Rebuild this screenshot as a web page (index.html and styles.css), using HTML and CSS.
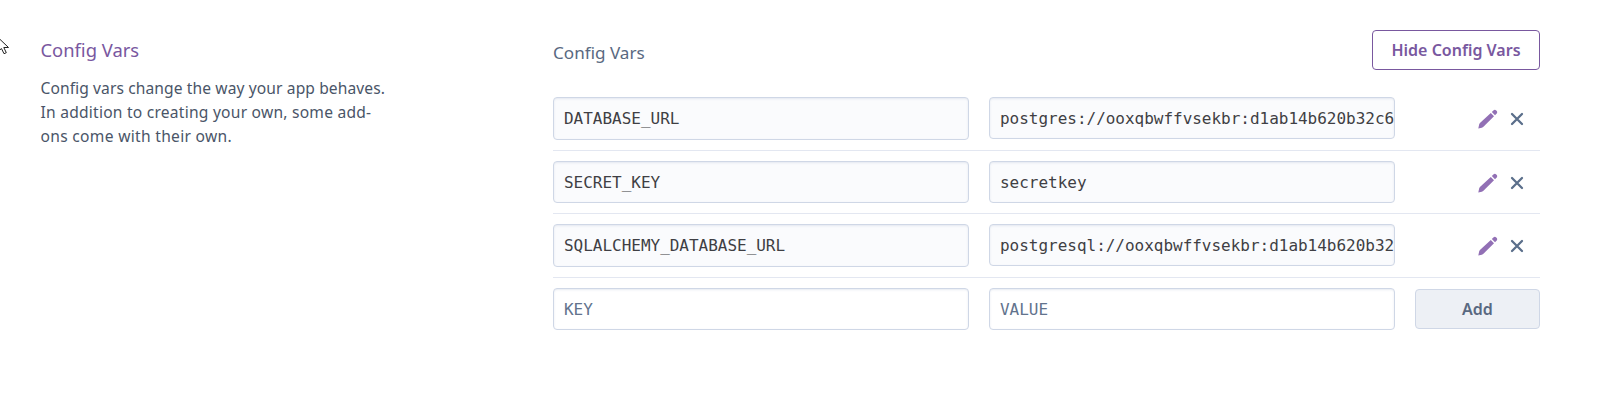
FILE: index.html
```
<!DOCTYPE html>
<html lang="en">
<head>
<meta charset="utf-8">
<title>Config Vars</title>
<link rel="stylesheet" href="styles.css">
</head>
<body>
<svg class="defs" width="0" height="0" aria-hidden="true">
  <symbol id="pencil" viewBox="0 0 20 20">
    <path d="M0.3 19.6 1.2 15.2Q1.5 14.4 2.2 13.8L12.8 4 16 7.2 5.7 17.5Q4.8 18.4 3.8 18.7Z"/>
    <path d="M13.8 3 15.4 1.5Q16.8 0.3 18.2 1.4L18.8 2Q19.8 3.3 18.7 4.6L17 6.2Z"/>
  </symbol>
  <symbol id="cross" viewBox="0 0 14 14">
    <path d="M2 2 12 12M12 2 2 12"/>
  </symbol>
</svg>
<svg class="cursor" width="10" height="22" viewBox="0 0 10 22"><path d="M-3 0.5 8.5 11.5H3.8L6.3 16.7 4 17.7 1.5 12.6-3 16Z"/></svg>
<main class="settings">
  <aside class="intro">
    <h2 class="intro-title">Config Vars</h2>
    <p class="intro-text"><span class="line-a">Config vars change the way your app behaves.</span><br><span class="line-b">In addition to creating your own, some add-</span><br><span class="line-c">ons come with their own.</span></p>
  </aside>
  <section class="panel">
    <header class="panel-head">
      <h3 class="panel-title">Config Vars</h3>
      <button class="btn btn-hide">Hide Config Vars</button>
    </header>
    <div class="row">
      <div class="field field-tall">DATABASE_URL</div>
      <div class="field">postgres://ooxqbwffvsekbr:d1ab14b620b32c6</div>
      <div class="actions"><svg class="pencil"><use href="#pencil"/></svg><svg class="cross"><use href="#cross"/></svg></div>
    </div>
    <div class="row row-short">
      <div class="field">SECRET_KEY</div>
      <div class="field">secretkey</div>
      <div class="actions"><svg class="pencil"><use href="#pencil"/></svg><svg class="cross"><use href="#cross"/></svg></div>
    </div>
    <div class="row">
      <div class="field field-tall">SQLALCHEMY_DATABASE_URL</div>
      <div class="field">postgresql://ooxqbwffvsekbr:d1ab14b620b32</div>
      <div class="actions"><svg class="pencil"><use href="#pencil"/></svg><svg class="cross"><use href="#cross"/></svg></div>
    </div>
    <div class="row row-new">
      <div class="field field-empty">KEY</div>
      <div class="field field-empty">VALUE</div>
      <button class="btn btn-add">Add</button>
    </div>
  </section>
</main>
</body>
</html>
```
FILE: styles.css
```
* { box-sizing: border-box; }
body {
  margin: 0;
  background: #fff;
  font-family: "Noto Sans", "Open Sans", sans-serif;
  overflow: hidden;
}
.defs { position: absolute; }
.cursor { position: absolute; left: 0; top: 36px; fill: #fff; stroke: #222; stroke-width: 1; }
.settings { display: flex; padding: 30px 79px 0 40.5px; height: 406px; }
.intro { width: 512.5px; flex: none; }
.intro-title {
  margin: 6px 0 0;
  font-size: 18.4px;
  line-height: 28px;
  font-weight: 400;
  color: #79589f;
}
.intro-text {
  margin: 12px 0 0;
  font-size: 15.6px;
  line-height: 24px;
  color: #4a5568;
  white-space: nowrap;
  font-feature-settings: "liga" 1;
}
.line-a { letter-spacing: .1px; }
.line-b { letter-spacing: .23px; }
.line-c { letter-spacing: .3px; }
.panel { width: 987px; }
.panel-head { display: flex; justify-content: space-between; height: 57px; }
.panel-title { margin: 9px 0 0; font-size: 17.1px; line-height: 27px; font-weight: 400; color: #596981; }
.btn { border-radius: 4px; font: 600 16px "Noto Sans", "Open Sans", sans-serif; padding: 0; }
.btn-hide { width: 168px; height: 40px; border: 1px solid #79589f; background: #fff; color: #79589f; }
.row {
  display: grid;
  grid-template-columns: 416px 406px 125px;
  column-gap: 20px;
  align-items: start;
  height: 64px;
  padding-top: 10px;
  border-bottom: 1px solid #e3e7f1;
}
.row-short { height: 63px; }
.row-new { border-bottom: 0; }
.field {
  height: 42px;
  padding: 0 0 0 10px;
  border: 1px solid #cfd7e6;
  border-radius: 4px;
  background: #fafbfd;
  box-shadow: inset 0 1px 2px rgba(207, 215, 230, .5);
  font: 16px/41px "DejaVu Sans Mono", monospace;
  letter-spacing: -.02px;
  color: #3f3f44;
  white-space: nowrap;
  overflow: hidden;
}
.field-tall { height: 43px; }
.field-empty { background: #fff; color: #62738d; }
.actions { display: flex; align-items: center; gap: 12px; height: 42px; padding-left: 63px; }
.pencil { width: 20px; height: 20px; margin-top: 2px; fill: #9270b5; }
.cross { width: 14px; height: 14px; margin-top: 1px; fill: none; stroke: #5b6f8b; stroke-width: 2.3; stroke-linecap: round; }
.btn-add { width: 125px; height: 40px; margin-top: 1px; border: 1px solid #cfd7e6; background: #edf0f5; color: #596981; }
```
